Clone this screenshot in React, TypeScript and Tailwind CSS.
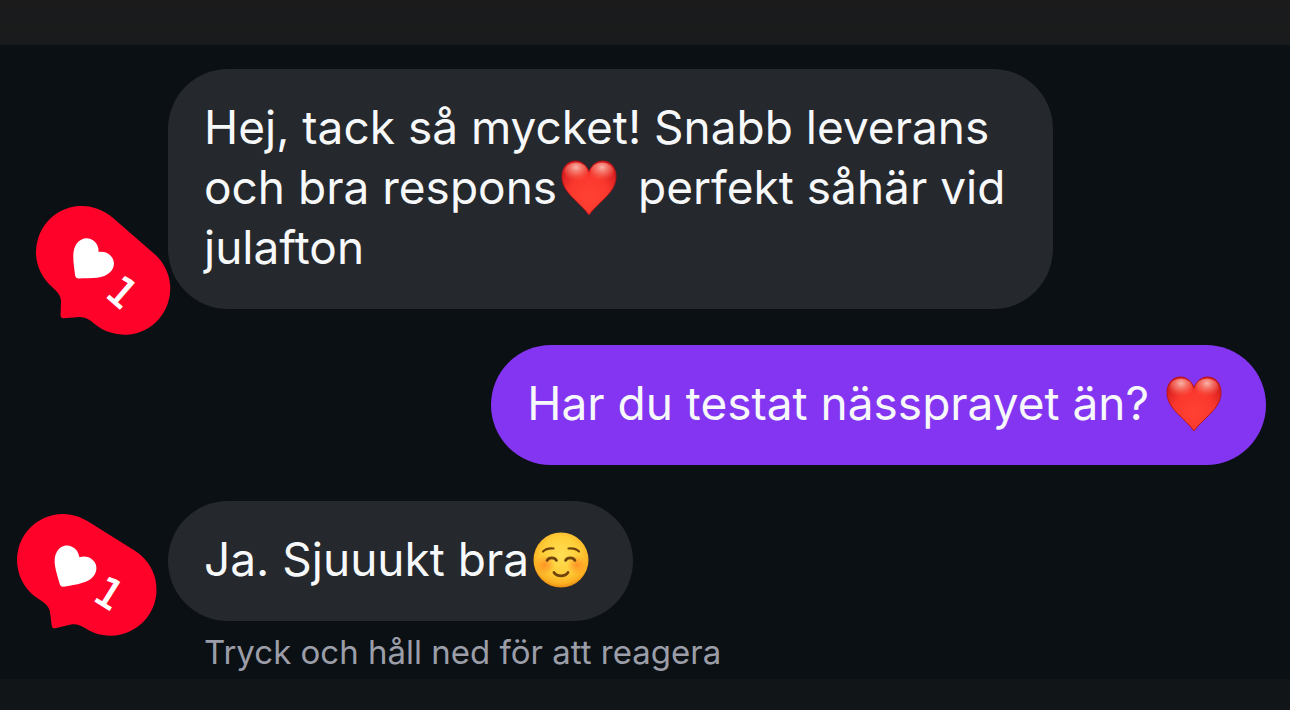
import { ReactNode } from 'react'
import clsx from 'clsx'

interface BubbleProps {
  own?: boolean
  children: ReactNode
}

interface LikeBadgeProps {
  count: number
  angle: number
  className: string
}

function HeartEmoji() {
  return (
    <svg
      viewBox="0 0 56 56"
      role="img"
      aria-label="Rött hjärta"
      className="mr-2 ml-1 inline-block h-14 w-14 align-[-12px]"
    >
      <defs>
        <radialGradient id="heart-fill" cx="0.5" cy="0.66" r="0.62">
          <stop offset="0" stopColor="#ff4234" />
          <stop offset="0.6" stopColor="#fb382d" />
          <stop offset="1" stopColor="#d81f20" />
        </radialGradient>
        <radialGradient id="heart-shine" cx="0.5" cy="0.25" r="0.75">
          <stop offset="0" stopColor="#ffc6ba" stopOpacity="0.9" />
          <stop offset="0.5" stopColor="#ff8a78" stopOpacity="0.55" />
          <stop offset="1" stopColor="#ff4a3a" stopOpacity="0" />
        </radialGradient>
      </defs>
      <path
        d="M28 11.500C25 4.500 20 1 14.500 1 6.500 1 1 7.500 1 16.500 1 33 18 41 28 55 38 41 55 33 55 16.500 55 7.500 49.500 1 41.500 1 36 1 31 4.500 28 11.500Z"
        fill="url(#heart-fill)"
        stroke="#b5151b"
        strokeWidth="1"
      />
      <ellipse cx="15" cy="12" rx="11.500" ry="9.500" fill="url(#heart-shine)" />
      <ellipse cx="41" cy="12" rx="11.500" ry="9.500" fill="url(#heart-shine)" />
    </svg>
  )
}

function SmileEmoji() {
  return (
    <svg
      viewBox="0 0 56 56"
      role="img"
      aria-label="Leende ansikte"
      className="mr-2 ml-1 inline-block h-14 w-14 align-[-12px]"
    >
      <defs>
        <radialGradient id="face-fill" cx="0.5" cy="0.42" r="0.58">
          <stop offset="0" stopColor="#ffdf55" />
          <stop offset="0.6" stopColor="#ffcd38" />
          <stop offset="0.88" stopColor="#fbb022" />
          <stop offset="1" stopColor="#e98d12" />
        </radialGradient>
        <radialGradient id="face-blush">
          <stop offset="0" stopColor="#ff7a1c" stopOpacity="0.7" />
          <stop offset="1" stopColor="#ff7a1c" stopOpacity="0" />
        </radialGradient>
      </defs>
      <circle cx="28" cy="28" r="27.5" fill="url(#face-fill)" />
      <circle cx="12" cy="33" r="10" fill="url(#face-blush)" />
      <circle cx="44" cy="33" r="10" fill="url(#face-blush)" />
      <g fill="none" stroke="#6f430b" strokeLinecap="round">
        <path d="M10 19.500C13 16.500 16 16 20.500 16.500" strokeWidth="2.200" />
        <path d="M46 19.500C43 16.500 40 16 35.500 16.500" strokeWidth="2.200" />
        <path d="M14 28.500C16 25 21.500 25 23.500 28.500" strokeWidth="2.600" />
        <path d="M32.500 28.500C34.500 25 40 25 42 28.500" strokeWidth="2.600" />
        <path d="M21 40.500C24 45 32 45 35 40.500" strokeWidth="2.800" />
      </g>
    </svg>
  )
}

/* Tilted red like sticker, drawn around the centre of its left cap */
function LikeBadge({ count, angle, className }: LikeBadgeProps) {
  return (
    <svg
      viewBox="-52 -52 144 144"
      role="img"
      aria-label={`${count} gillar`}
      className={clsx('absolute left-0 h-36 w-36 overflow-visible', className)}
    >
      <g transform={`rotate(${angle})`}>
        <path
          d="M0-46H56A46 46 0 0 1 56 46C50 46 45 47 41 50.500L29.500 62Q27.500 64 25.500 62L16.500 51C13 47 8 46 0 46A46 46 0 0 1 0-46Z"
          fill="#ff0229"
        />
        <path
          d="M12.500-11C16-15 20-16.500 24-16 31-15.500 35-9.500 34.500-3 34 6 25 13 14.500 22.500Q12.500 24 10.500 22.500C0 13-9 6-9.500-3-10-9.500-6-15.500 1-16 5-16.500 9-15 12.500-11Z"
          fill="#fff"
        />
        <text
          x="57"
          y="18"
          textAnchor="middle"
          className="fill-white stroke-white stroke-1 font-['DejaVu_Sans',sans-serif] text-[40px]"
        >
          {count}
        </text>
      </g>
    </svg>
  )
}

function Bubble({ own = false, children }: BubbleProps) {
  return (
    <p
      className={clsx(
        'max-w-[885px] rounded-[60px] px-9 pt-7 pb-8 text-[46px] leading-[60px] text-[#f6f8fa]',
        own ? 'bg-[#8435f1]' : 'bg-[#25282c]'
      )}
    >
      {children}
    </p>
  )
}

export default function App() {
  return (
    <div className="flex min-h-screen flex-col bg-[#0b1014] font-[Inter,sans-serif]">
      <header className="h-[45px] bg-linear-to-b from-[#1b1b1c] to-[#181b1b]" />

      <main className="flex flex-col gap-9 pt-6 pb-2">
        <div className="relative flex pl-[168px]">
          <Bubble>
            Hej, tack så mycket! Snabb leverans och bra respons
            <HeartEmoji /> perfekt såhär vid julafton
          </Bubble>
          <LikeBadge count={1} angle={41} className="top-[131px] ml-[30px]" />
        </div>

        <div className="flex justify-end pr-6">
          <Bubble own>
            Har du testat nässprayet än? <HeartEmoji />
          </Bubble>
        </div>

        <div className="relative flex flex-col items-start pl-[168px]">
          <Bubble>
            Ja. Sjuuukt bra
            <SmileEmoji />
          </Bubble>
          <LikeBadge count={1} angle={32} className="top-[7px] ml-[11px]" />
          <p className="mt-3 pl-9 text-[33px] leading-[38px] text-[#9b9ea8]">
            Tryck och håll ned för att reagera
          </p>
        </div>
      </main>

      <footer className="flex-1 bg-[#121518]" />
    </div>
  )
}
